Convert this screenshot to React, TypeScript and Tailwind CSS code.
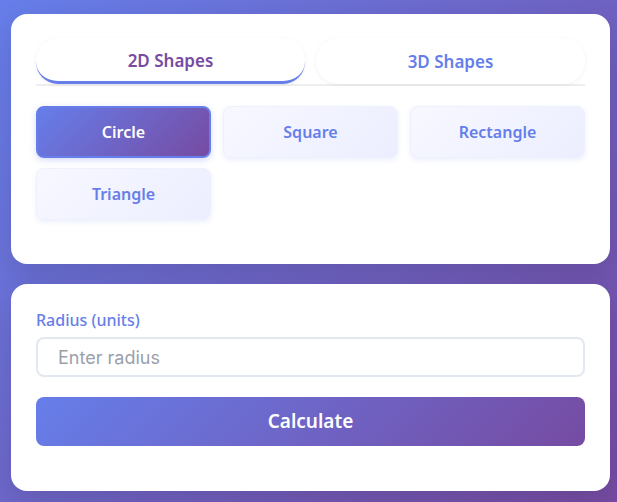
import React, { useState } from 'react';

const shapes2D = ['Circle', 'Square', 'Rectangle', 'Triangle'];

const App: React.FC = () => {
  const [tab, setTab] = useState<'2d' | '3d'>('2d');
  const [shape, setShape] = useState('Circle');
  const [radius, setRadius] = useState('');

  return (
    <div className="min-h-screen bg-[linear-gradient(135deg,#667eea_0%,#764ba2_100%)] pl-[11px] pr-[7px] pt-[14px] pb-[11px] font-['Noto_Sans','Open_Sans',sans-serif]">
      {/* Shape picker */}
      <div className="bg-white rounded-[16px] px-[25px] pt-[24px] pb-[44px] shadow-[0_10px_30px_rgba(0,0,0,0.12)]">
        <div className="flex gap-[11px] border-b-2 border-[#eeeeee]">
          <button
            onClick={() => setTab('2d')}
            className={`flex-1 h-[46px] pt-[2px] rounded-[22px] bg-white text-[17px] font-semibold shadow-[0_1px_4px_rgba(0,0,0,0.06)] ${
              tab === '2d' ? 'border-b-[3px] border-[#667eea] text-[#764ba2]' : 'text-[#667eea]'
            }`}
          >
            2D Shapes
          </button>
          <button
            onClick={() => setTab('3d')}
            className={`flex-1 h-[46px] pt-[2px] rounded-[22px] bg-white text-[17px] font-semibold shadow-[0_1px_4px_rgba(0,0,0,0.06)] ${
              tab === '3d' ? 'border-b-[3px] border-[#667eea] text-[#764ba2]' : 'text-[#667eea]'
            }`}
          >
            3D Shapes
          </button>
        </div>

        <div className="grid grid-cols-3 gap-x-[12px] gap-y-[10px] mt-[20px]">
          {shapes2D.map(s => (
            <button
              key={s}
              onClick={() => setShape(s)}
              className={`h-[52px] rounded-[8px] text-[16px] font-semibold ${
                shape === s
                  ? 'bg-[linear-gradient(135deg,#667eea_0%,#764ba2_100%)] border-2 border-[#667eea] text-white shadow-[0_2px_6px_rgba(102,126,234,0.3)]'
                  : 'bg-[linear-gradient(135deg,#f7f8ff_0%,#eceeff_100%)] border border-[#eef0fb] text-[#667eea] shadow-[0_2px_5px_rgba(102,126,234,0.12)]'
              }`}
            >
              {s}
            </button>
          ))}
        </div>
      </div>

      {/* Input */}
      <div className="mt-[20px] bg-white rounded-[16px] px-[25px] pt-[25px] pb-[45px] shadow-[0_10px_30px_rgba(0,0,0,0.12)]">
        <label className="block text-[16px] leading-[22px] font-medium text-[#667eea] mb-[6px]">Radius (units)</label>
        <input
          value={radius}
          onChange={e => setRadius(e.target.value)}
          placeholder="Enter radius"
          className="w-full h-[40px] rounded-[8px] border-2 border-[#e2e8f0] px-[20px] text-[18px] font-['Inter',sans-serif] placeholder:text-[#9aa0ab] outline-none"
        />
        <button className="mt-[20px] w-full h-[49px] rounded-[8px] bg-[linear-gradient(135deg,#667eea_0%,#764ba2_100%)] text-white text-[19px] font-semibold">
          Calculate
        </button>
      </div>
    </div>
  );
};

export default App;
